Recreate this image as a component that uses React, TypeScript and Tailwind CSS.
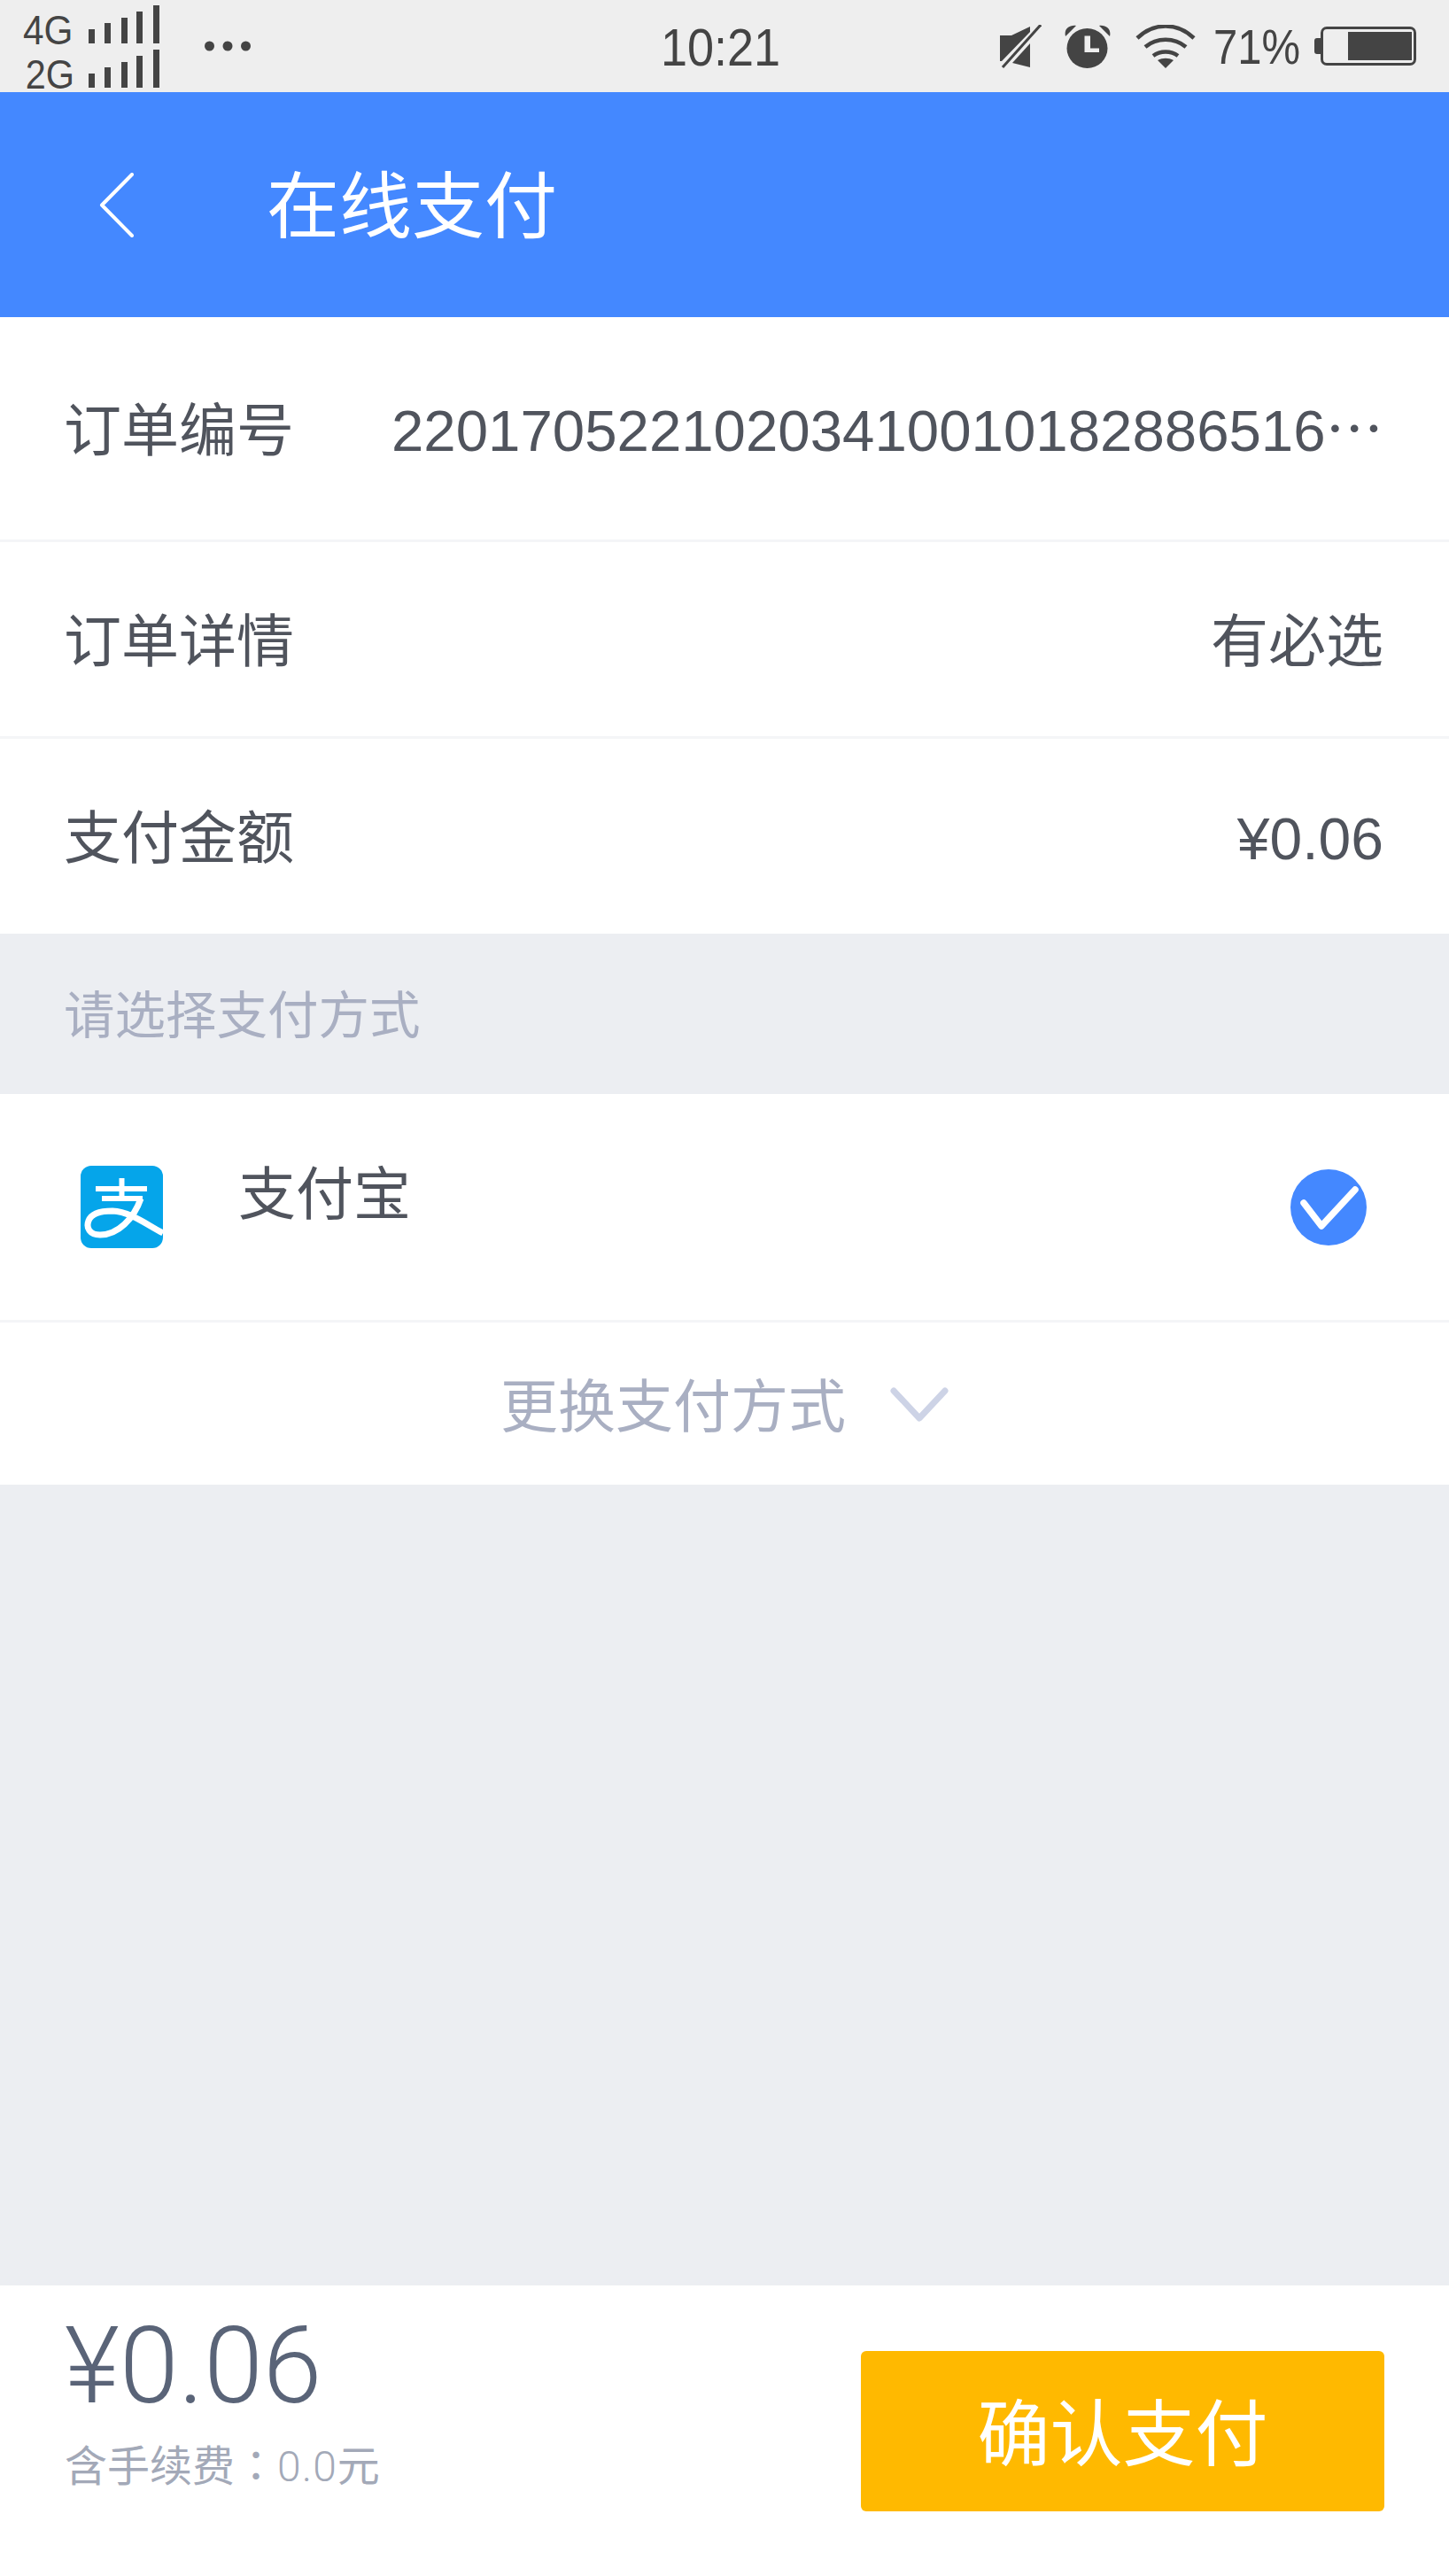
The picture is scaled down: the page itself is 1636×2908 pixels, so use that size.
const sans = "font-['Liberation_Sans','Noto_Sans_CJK_SC',sans-serif]";
const digits = "font-['Roboto','Noto_Sans_CJK_SC',sans-serif] font-light";

function Bars() {
  return (
    <svg width="80" height="43" viewBox="0 0 80 43" fill="#444444">
      <rect x="0" y="27" width="7" height="16" />
      <rect x="18" y="20" width="7" height="23" />
      <rect x="37" y="14" width="7" height="29" />
      <rect x="54" y="7" width="7" height="36" />
      <rect x="73" y="0" width="7" height="43" />
    </svg>
  );
}

function StatusBar() {
  return (
    <div className={`h-[104px] shrink-0 bg-[#eeeeee] text-[#444444] flex items-center ${sans}`}>
      <div className="ml-[26px] w-[154px] flex flex-col gap-[7px] mt-[1px]">
        <div className="h-[43px] flex items-end">
          <span className="w-[74px] -mb-[7px] text-[46px] leading-[44px] scale-x-[0.92] origin-left">4G</span>
          <Bars />
        </div>
        <div className="h-[43px] flex items-end">
          <span className="w-[74px] pl-[3px] -mb-[7px] text-[46px] leading-[44px] scale-x-[0.9] origin-left">2G</span>
          <Bars />
        </div>
      </div>
      <svg className="ml-[51px]" width="52" height="12" viewBox="0 0 52 12" fill="#444444">
        <circle cx="5.5" cy="6" r="5.5" />
        <circle cx="26" cy="6" r="5.5" />
        <circle cx="46.5" cy="6" r="5.5" />
      </svg>
      <span className="ml-[463px] mt-[4px] w-[136px] text-[60px] leading-[68px] whitespace-nowrap scale-x-[0.9] origin-left">10:21</span>
      <div className="ml-auto mr-[37px] flex items-center">
        <svg width="47" height="49" viewBox="0 0 47 49" fill="#444444">
          <path d="M0 12H13L34 2V8L2 41H0Z" />
          <path d="M14 43 34 21V48Z" />
          <path d="M3 48 46 0" fill="none" stroke="#444444" strokeWidth="3" />
        </svg>
        <svg className="ml-[26px]" width="52" height="49" viewBox="0 0 52 49" fill="#444444">
          <ellipse cx="25.5" cy="26.5" rx="23" ry="22.5" />
          <path d="M1 13C-1 5 5 0 13 1ZM51 13c2-8-4-13-12-12Z" />
          <path d="M22.5 12.5h6.5v14h10v4.5H22.5z" fill="#eeeeee" />
        </svg>
        <svg className="ml-[28px]" width="68" height="49" viewBox="0 0 68 49" fill="none" stroke="#444444" strokeWidth="4.5">
          <path d="M2 15C21-3 47-3 66 15" />
          <path d="M11 25c13-11 33-11 46 0" />
          <path d="M20 35c8-6 20-6 28 0" />
          <path d="M34 49 25 40c6-3 12-3 18 0z" fill="#444444" stroke="none" />
        </svg>
        <span className="ml-[20px] mt-[2px] w-[100px] text-[56px] leading-[60px] whitespace-nowrap scale-x-[0.875] origin-left">71%</span>
        <div className="ml-[14px] w-[7px] h-[18px] bg-[#444444] rounded-l-[3px]" />
        <div className="w-[108px] h-[44px] border-[3px] border-[#444444] rounded-[7px] flex justify-end items-center pr-[2px]">
          <div className="w-[72px] h-[32px] bg-[#444444]" />
        </div>
      </div>
    </div>
  );
}

function InfoRow({ label, value, h, border = true, valueClass = "text-[65px]" }: { label: string; value: string; h: string; border?: boolean; valueClass?: string }) {
  return (
    <div className={`${h} shrink-0 bg-white flex items-center justify-between pt-[6px] pl-[72px] pr-[74px] ${border ? "border-b-[3px] border-[#f4f5f7]" : ""}`}>
      <span className="text-[65px] leading-[80px] text-[#50545d]">{label}</span>
      <span className={`${valueClass} leading-[80px] text-[#50545d]`}>{value}</span>
    </div>
  );
}

export default function App() {
  return (
    <div className={`w-[1636px] h-[2908px] flex flex-col bg-[#eceef2] overflow-hidden ${sans}`}>
      <StatusBar />
      <div className="h-[254px] shrink-0 bg-[#4488ff] flex items-center pl-[112px]">
        <svg width="39" height="73" viewBox="0 0 39 73" fill="none" stroke="#ffffff" strokeWidth="4" strokeLinecap="round" strokeLinejoin="round">
          <path d="M37 2 3 36.5 37 71" />
        </svg>
        <span className="ml-[150px] pt-[6px] text-[82px] leading-[96px] text-white">在线支付</span>
      </div>
      <InfoRow label="订单编号" value="22017052210203410010182886516⋯" h="h-[254px]" valueClass="text-[65.4px]" />
      <InfoRow label="订单详情" value="有必选" h="h-[222px]" />
      <InfoRow label="支付金额" value="¥0.06" h="h-[220px]" border={false} valueClass="text-[66px]" />
      <div className="h-[181px] shrink-0 flex items-center pt-[4px] pl-[72px]">
        <span className="text-[57.5px] leading-[70px] text-[#a9afc2]">请选择支付方式</span>
      </div>
      <div className="h-[258px] shrink-0 bg-white border-b-[3px] border-[#f4f5f7] flex items-center pl-[91px] pr-[93px]">
        <svg width="93" height="93" viewBox="0 0 93 93">
          <rect width="93" height="93" rx="12" fill="#05a5ea" />
          <path d="M17 26H75M24 37H70M46.5 14V37" fill="none" stroke="#ffffff" strokeWidth="6" />
          <path d="M68 37C60 60 42 78 22 78 10 78 6 70 9 62 12 54 22 51 36 51 56 52 74 66 93 76" fill="none" stroke="#ffffff" strokeWidth="7" />
        </svg>
        <span className="ml-[85px] mb-[28px] text-[65px] leading-[80px] text-[#50545d]">支付宝</span>
        <svg className="ml-auto" width="86" height="86" viewBox="0 0 86 86">
          <circle cx="43" cy="43" r="43" fill="#4488ff" />
          <path d="M15 38 35 64 73 23" fill="none" stroke="#ffffff" strokeWidth="7.5" strokeLinecap="round" strokeLinejoin="round" />
        </svg>
      </div>
      <div className="h-[183px] shrink-0 bg-white flex items-center justify-center">
        <span className="mt-[8px] text-[65px] leading-[80px] text-[#a9afc2]">更换支付方式</span>
        <svg className="ml-[50px]" width="66" height="40" viewBox="0 0 66 40" fill="none" stroke="#cdd3e6" strokeWidth="7" strokeLinecap="round" strokeLinejoin="round">
          <path d="M4 5 33 36 62 5" />
        </svg>
      </div>
      <div className="flex-1" />
      <div className="h-[328px] shrink-0 bg-white flex items-start justify-between pl-[73px] pr-[73px]">
        <div className="flex flex-col pt-[31px]">
          <span className={`text-[120px] leading-[120px] text-[#5a6478] ${digits}`}>¥0.06</span>
          <span className="mt-[19px] text-[48px] leading-[60px] text-[#a3a9b8]">
            含手续费<span className="font-['Noto_Sans_CJK_TC',sans-serif]">：</span>
            <span className={`tracking-[1px] ${digits}`}>0.0</span>元
          </span>
        </div>
        <div className="mt-[74px] w-[591px] h-[181px] bg-[#ffb900] rounded-[6px] flex items-center justify-center pt-[8px]">
          <span className="text-[82px] leading-[96px] text-white">确认支付</span>
        </div>
      </div>
    </div>
  );
}
